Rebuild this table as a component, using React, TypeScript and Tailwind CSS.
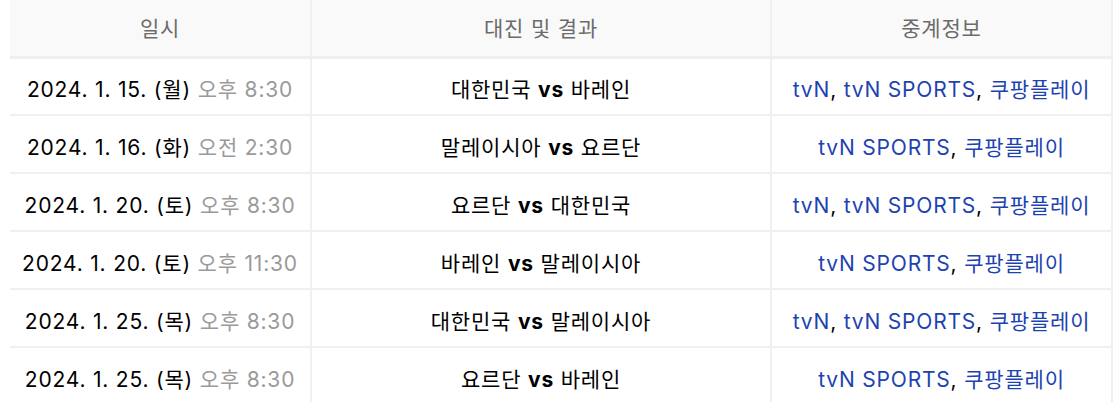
import React from 'react';

type Match = {
  date: string;
  time: string;
  home: string;
  away: string;
  channels: string[];
};

const matches: Match[] = [
  { date: '2024. 1. 15. (월)', time: '오후 8:30', home: '대한민국', away: '바레인', channels: ['tvN', 'tvN SPORTS', '쿠팡플레이'] },
  { date: '2024. 1. 16. (화)', time: '오전 2:30', home: '말레이시아', away: '요르단', channels: ['tvN SPORTS', '쿠팡플레이'] },
  { date: '2024. 1. 20. (토)', time: '오후 8:30', home: '요르단', away: '대한민국', channels: ['tvN', 'tvN SPORTS', '쿠팡플레이'] },
  { date: '2024. 1. 20. (토)', time: '오후 11:30', home: '바레인', away: '말레이시아', channels: ['tvN SPORTS', '쿠팡플레이'] },
  { date: '2024. 1. 25. (목)', time: '오후 8:30', home: '대한민국', away: '말레이시아', channels: ['tvN', 'tvN SPORTS', '쿠팡플레이'] },
  { date: '2024. 1. 25. (목)', time: '오후 8:30', home: '요르단', away: '바레인', channels: ['tvN SPORTS', '쿠팡플레이'] },
];

const App: React.FC = () => {
  return (
    <div
      className="bg-white pl-[10px] h-[402px] overflow-hidden"
      style={{ fontFamily: 'Inter, "Noto Sans CJK KR", sans-serif' }}
    >
      <table className="w-[1102px] table-fixed border-collapse tracking-[0.8px]">
        <colgroup>
          <col className="w-[301px]" />
          <col className="w-[460px]" />
          <col className="w-[341px]" />
        </colgroup>
        <thead>
          <tr className="bg-[#f9f9f9] border-b-[3px] border-[#efefef]">
            <th className="h-[57px] pt-[2px] font-normal text-[21px] text-[#6b6b6b] border-r-2 border-[#f0f0f0]">일시</th>
            <th className="h-[57px] pt-[2px] font-normal text-[21px] text-[#6b6b6b] border-r-2 border-[#f0f0f0]">대진 및 결과</th>
            <th className="h-[57px] pt-[2px] font-normal text-[21px] text-[#6b6b6b] border-r-2 border-[#f0f0f0]">중계정보</th>
          </tr>
        </thead>
        <tbody>
          {matches.map((m, i) => (
            <tr key={i} className="border-b-2 border-[#f0f0f0]">
              <td className="h-[58px] pt-[7px] text-center text-[21px] text-black border-r-2 border-[#f0f0f0]">
                {m.date} <span className="text-[#9a9a9a]">{m.time}</span>
              </td>
              <td className="h-[58px] pt-[7px] text-center text-[21px] text-black border-r-2 border-[#f0f0f0]">
                {m.home} <b className="font-bold">vs</b> {m.away}
              </td>
              <td className="h-[58px] pt-[7px] text-center text-[21px] border-r-2 border-[#f0f0f0]">
                {m.channels.map((c, j) => (
                  <React.Fragment key={c}>
                    {j > 0 && <span className="text-black">, </span>}
                    <a className="text-[#1d43b0]">{c}</a>
                  </React.Fragment>
                ))}
              </td>
            </tr>
          ))}
        </tbody>
      </table>
    </div>
  );
};

export default App;
